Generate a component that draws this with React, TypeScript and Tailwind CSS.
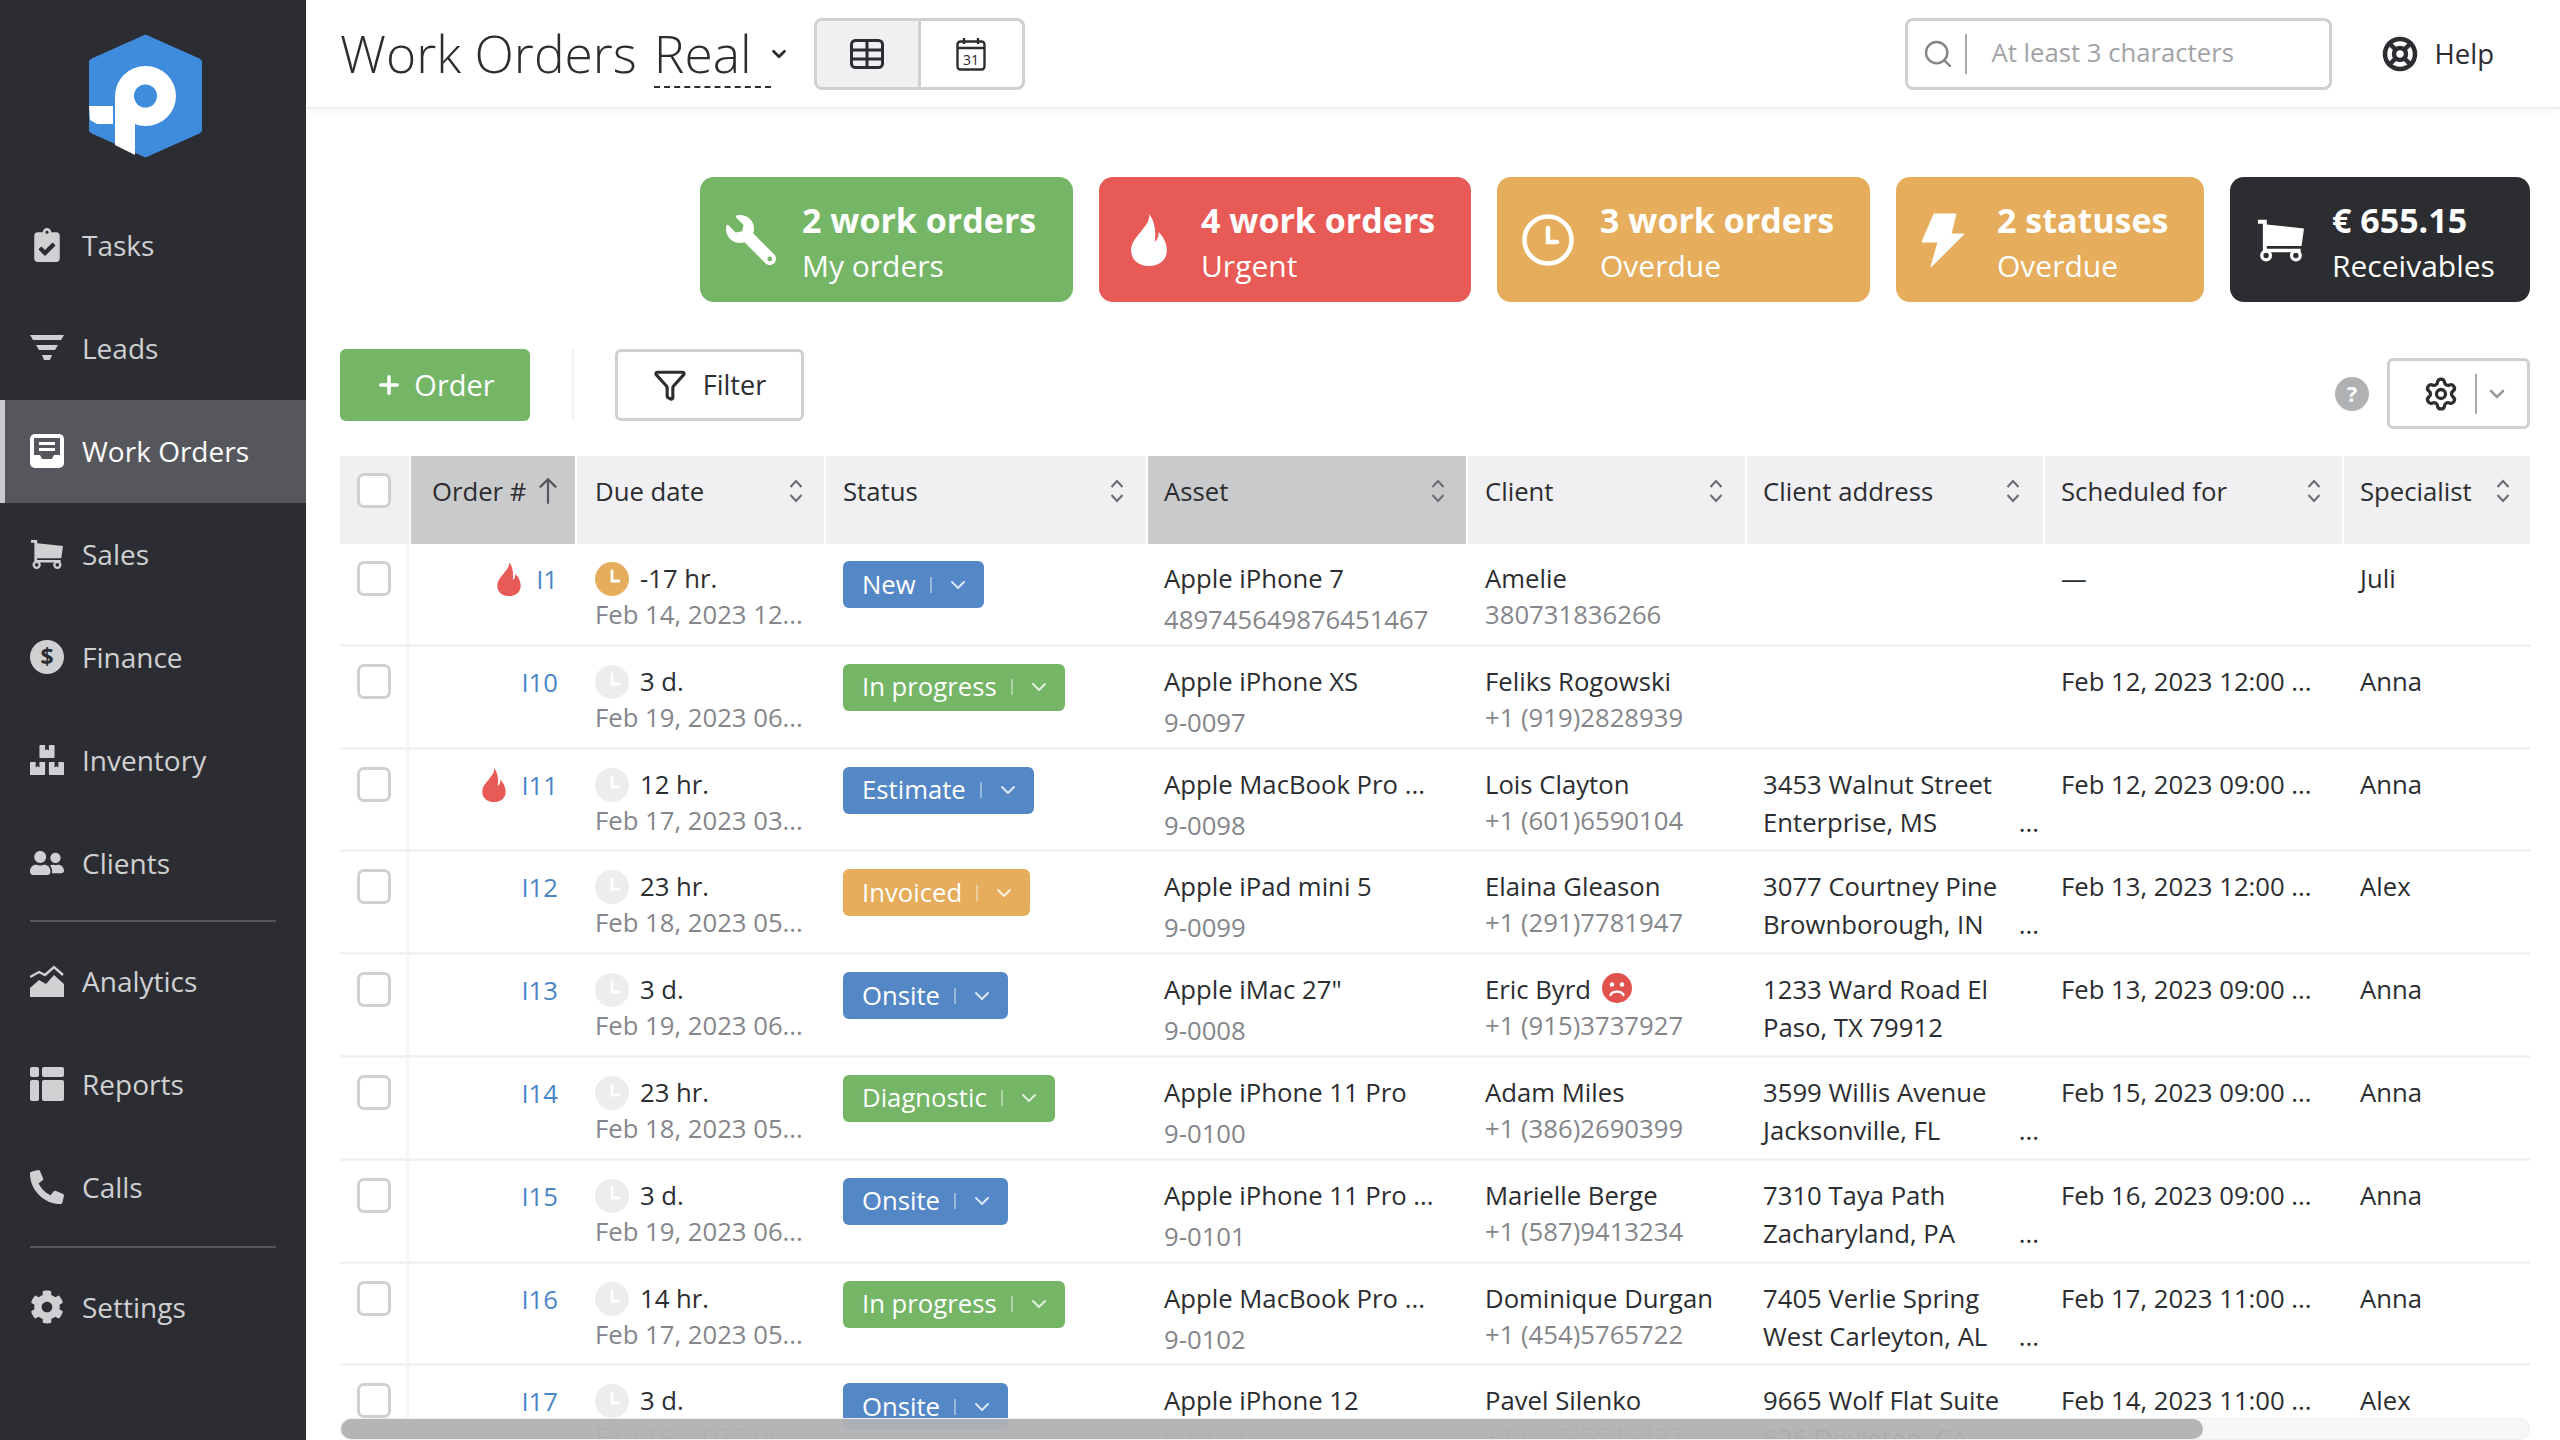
import { ChevronDown, Filter, LifeBuoy, Plus, Search, Settings as Gear } from 'lucide-react';
import { FaBoxes, FaClipboardCheck, FaCog, FaPhoneAlt, FaUserFriends, FaWrench } from 'react-icons/fa';
import type { ReactNode } from 'react';

// shared column template: header row and body rows must stay in step
const COLS = 'grid grid-cols-[69px_164px_247px_320px_318px_277px_296px_297px_186px] gap-x-[2px]';

function Logo() {
  return (
    <svg viewBox="0 0 113 124" className="w-[113px] h-[124px]">
      <path d="M56.5 2 L108 25 Q113 27 113 33 V91 Q113 97 108 99 L56.5 122 L5 99 Q0 97 0 91 V33 Q0 27 5 25 Z" fill="#3f8bdc" stroke="#3f8bdc" strokeWidth="3" strokeLinejoin="round" />
      <ellipse cx="56.5" cy="62" rx="30.5" ry="30" fill="#fff" />
      <polygon points="26,62 46,62 46,121 26,111" fill="#fff" />
      <path d="M0 72 H24 V90 H8 L1 86 Z" fill="#fff" />
      <ellipse cx="56.5" cy="62" rx="11.5" ry="11.5" fill="#3f8bdc" />
    </svg>
  );
}

function LeadsIcon() {
  return (
    <svg viewBox="0 0 34 26" className="w-[34px] h-[26px]" fill="currentColor">
      <polygon points="0,0 34,0 31,5 3,5" />
      <polygon points="6,10 28,10 25,15 9,15" />
      <polygon points="12,20 22,20 20,25 14,25" />
    </svg>
  );
}

function WorkOrdersIcon() {
  return (
    <svg viewBox="0 0 34 34" className="w-[34px] h-[34px]">
      <rect width="34" height="34" rx="5" fill="#fff" />
      <path d="M4 4h26v17h-6l-2 4H12l-2-4H4z" fill="#56575c" />
      <rect x="9" y="8" width="16" height="3" fill="#fff" />
      <rect x="9" y="14" width="16" height="3" fill="#fff" />
    </svg>
  );
}

function CartIcon({ size }: { size: string }) {
  return (
    <svg viewBox="0 0 34 32" className={size} fill="currentColor">
      <path d="M0 1h6.5v3.5L34 7.5l-1.8 13H6.5v2h25v2.5H3.6V4H0z" />
      <circle cx="6" cy="27.5" r="3.2" fill="none" stroke="currentColor" strokeWidth="2.4" />
      <circle cx="28" cy="27.5" r="3.2" fill="none" stroke="currentColor" strokeWidth="2.4" />
    </svg>
  );
}

function FinanceIcon() {
  return (
    <svg viewBox="0 0 34 34" className="w-[34px] h-[34px]">
      <circle cx="17" cy="17" r="17" fill="currentColor" />
      <text x="17" y="25" textAnchor="middle" fontSize="23" fontWeight="700" fill="#2c2d32" fontFamily="Open Sans, sans-serif">$</text>
    </svg>
  );
}

function AnalyticsIcon() {
  return (
    <svg viewBox="0 0 34 32" className="w-[34px] h-[32px]" fill="currentColor">
      <path d="M0 12 L9 7 L15 10 L24 2 L33 10" fill="none" stroke="currentColor" strokeWidth="2.4" />
      <path d="M0 32 V23 L9 15 L16 19 L24 10 L34 19 V32 Z" />
    </svg>
  );
}

function ReportsIcon() {
  return (
    <svg viewBox="0 0 34 34" className="w-[34px] h-[34px]" fill="currentColor">
      <rect width="9" height="10" rx="2" />
      <rect y="13" width="9" height="21" rx="2" />
      <rect x="12" width="22" height="10" rx="2" />
      <rect x="12" y="13" width="22" height="21" rx="2" />
    </svg>
  );
}

const navTop: { label: string; icon: ReactNode; active?: boolean }[] = [
  { label: 'Tasks', icon: <FaClipboardCheck className="w-[30px] h-[34px]" /> },
  { label: 'Leads', icon: <LeadsIcon /> },
  { label: 'Work Orders', icon: <WorkOrdersIcon />, active: true },
  { label: 'Sales', icon: <CartIcon size="w-[32px] h-[32px]" /> },
  { label: 'Finance', icon: <FinanceIcon /> },
  { label: 'Inventory', icon: <FaBoxes className="w-[34px] h-[34px]" /> },
  { label: 'Clients', icon: <FaUserFriends className="w-[36px] h-[30px]" /> },
];

const navMid = [
  { label: 'Analytics', icon: <AnalyticsIcon /> },
  { label: 'Reports', icon: <ReportsIcon /> },
  { label: 'Calls', icon: <FaPhoneAlt className="w-[34px] h-[34px]" /> },
];

function NavItem({ label, icon, active }: { label: string; icon: ReactNode; active?: boolean }) {
  return (
    <div
      className={
        active
          ? 'h-[103px] flex items-center border-l-[5px] border-[#c9cacc] bg-[#56575c] pl-[25px] pb-[2px] text-white'
          : 'h-[103px] flex items-center pl-[30px] pb-[2px] text-[#cfd0d2]'
      }
    >
      <span className="w-[34px] flex justify-center">{icon}</span>
      <span className="ml-[18px] text-[28px]">{label}</span>
    </div>
  );
}

function Sidebar() {
  return (
    <aside className="w-[306px] shrink-0 bg-[#2c2d32] h-full">
      <div className="h-[194px] pt-[34px] pl-[89px]">
        <Logo />
      </div>
      {navTop.map((n) => (
        <NavItem key={n.label} {...n} />
      ))}
      <div className="mx-[30px] mt-[5px] mb-[8px] h-[2px] bg-[#55565a]" />
      {navMid.map((n) => (
        <NavItem key={n.label} {...n} />
      ))}
      <div className="mx-[30px] mt-[7px] mb-[8px] h-[2px] bg-[#55565a]" />
      <NavItem label="Settings" icon={<FaCog className="w-[34px] h-[34px]" />} />
    </aside>
  );
}

function TableIcon() {
  return (
    <svg viewBox="0 0 34 30" className="w-[34px] h-[30px]" fill="none" stroke="#2c2d30" strokeWidth="3">
      <rect x="1.5" y="1.5" width="31" height="27" rx="4" />
      <path d="M1.5 11h31M1.5 20h31M17 1.5v27" />
    </svg>
  );
}

function CalendarIcon() {
  return (
    <svg viewBox="0 0 30 34" className="w-[30px] h-[34px]" fill="none" stroke="#2c2d30" strokeWidth="2.4">
      <rect x="1.5" y="4.5" width="27" height="28" rx="3" />
      <path d="M1.5 11h27M8 1v6M22 1v6" />
      <text x="15" y="28" textAnchor="middle" fontSize="14" fill="#2c2d30" stroke="none" fontFamily="Open Sans, sans-serif">31</text>
    </svg>
  );
}

function Header() {
  return (
    <header className="h-[109px] shrink-0 flex items-center pl-[34px] pr-[66px] border-b-2 border-[#eeeeef] shadow-[0_3px_8px_rgba(0,0,0,0.03)]">
      <h1 className="text-[51.5px] font-light text-[#2c2d30] leading-none">Work Orders</h1>
      <div className="ml-[17px] relative text-[51.5px] font-light text-[#2c2d30] leading-none">
        Real
        <div className="absolute left-0 w-[117px] top-[58px] border-b-2 border-dashed border-[#2c2d30]" />
      </div>
      <ChevronDown className="ml-[16px] w-[22px] h-[22px] text-[#2c2d30]" strokeWidth={3} />
      <div className="ml-[24px] flex h-[72px] w-[211px] rounded-[8px] border-[3px] border-[#cfd0d2] overflow-hidden">
        <div className="w-[104px] flex items-center justify-center bg-[#f0f0f2] border-r-[3px] border-[#cfd0d2]">
          <TableIcon />
        </div>
        <div className="flex-1 flex items-center justify-center">
          <CalendarIcon />
        </div>
      </div>
      <div className="ml-auto flex items-center w-[427px] h-[72px] rounded-[8px] border-[3px] border-[#cfd0d2] pl-[14px]">
        <Search className="w-[32px] h-[32px] text-[#85868a]" strokeWidth={1.8} />
        <div className="ml-[11px] w-[2px] h-[40px] bg-[#a8a9ac]" />
        <span className="ml-[25px] text-[25.7px] text-[#a2a3a6]">At least 3 characters</span>
      </div>
      <LifeBuoy className="ml-[50px] w-[36px] h-[36px] text-[#2c2d30]" strokeWidth={3} />
      <span className="ml-[17px] text-[27.5px] text-[#2c2d30]">Help</span>
    </header>
  );
}

function FlameIcon({ size }: { size: string }) {
  return (
    <svg viewBox="0 0 24 32" className={size} fill="currentColor">
      <path d="M12 0C13 4 9.500 7.500 6.500 11.500 3.500 15 1 18 1 22.500 1 28 5.500 32 12 32s11-4 11-9.500C23 18 21 14 18 11c0 3-1 5-2.500 6C16.500 11 15.500 4 12 0z" />
    </svg>
  );
}

function ClockOutline() {
  return (
    <svg viewBox="0 0 52 52" className="w-[52px] h-[52px]" fill="none" stroke="#fff" strokeWidth="4.500">
      <circle cx="26" cy="26" r="23.500" />
      <path d="M26 14v14h9" strokeLinecap="round" />
    </svg>
  );
}

function BoltIcon() {
  return (
    <svg viewBox="0 0 42 54" className="w-[42px] h-[54px]" fill="#fff">
      <path d="M12 1h22l-5 20h13L9 54l7-25H0z" stroke="#fff" strokeWidth="1" strokeLinejoin="round" />
    </svg>
  );
}

const cards = [
  { w: 'w-[373px]', bg: 'bg-[#74b566]', icon: <FaWrench className="w-[50px] h-[50px] -scale-x-100" />, pad: 'pl-[26px]', gap: 'ml-[26px]', a: '2 work orders', b: 'My orders' },
  { w: 'w-[372px]', bg: 'bg-[#e85a55]', icon: <FlameIcon size="w-[42px] h-[52px]" />, pad: 'pl-[29px]', gap: 'ml-[31px]', a: '4 work orders', b: 'Urgent' },
  { w: 'w-[373px]', bg: 'bg-[#e5ad5c]', icon: <ClockOutline />, pad: 'pl-[25px]', gap: 'ml-[26px]', a: '3 work orders', b: 'Overdue' },
  { w: 'w-[308px]', bg: 'bg-[#e5ad5c]', icon: <BoltIcon />, pad: 'pl-[26px]', gap: 'ml-[33px]', a: '2 statuses', b: 'Overdue' },
  { w: 'w-[300px]', bg: 'bg-[#2c2d30]', icon: <CartIcon size="w-[46px] h-[46px]" />, pad: 'pl-[28px]', gap: 'ml-[28px]', a: '€ 655.15', b: 'Receivables' },
];

function SummaryCards() {
  return (
    <div className="mt-[68px] flex justify-end gap-[26px] pr-[30px]">
      {cards.map((c) => (
        <div key={c.a + c.b} className={`${c.w} ${c.bg} ${c.pad} h-[125px] rounded-[14px] flex items-center text-white`}>
          {c.icon}
          <div className={`${c.gap} pt-[6px]`}>
            <div className="text-[34px] font-bold leading-[46px]">{c.a}</div>
            <div className="text-[30px] leading-[46px]">{c.b}</div>
          </div>
        </div>
      ))}
    </div>
  );
}

function Toolbar() {
  return (
    <div className="mt-[47px] flex items-start pl-[34px] pr-[30px]">
      <div className="w-[190px] h-[72px] rounded-[6px] bg-[#74b566] flex items-center justify-center text-white text-[29px]">
        <Plus className="w-[28px] h-[28px]" strokeWidth={3} />
        <span className="ml-[11px]">Order</span>
      </div>
      <div className="ml-[42px] w-[2px] h-[72px] bg-[#f2f2f3]" />
      <div className="ml-[41px] w-[189px] h-[72px] rounded-[6px] border-[3px] border-[#cfd0d2] flex items-center justify-center text-[27px] text-[#2c2d30]">
        <Filter className="w-[34px] h-[34px]" strokeWidth={2.2} />
        <span className="ml-[16px]">Filter</span>
      </div>
      <div className="ml-auto mt-[9px] flex items-center">
        <div className="w-[34px] h-[34px] rounded-full bg-[#b0b1b3] flex items-center justify-center text-white text-[22px] font-bold">?</div>
        <div className="ml-[18px] w-[143px] h-[71px] rounded-[6px] border-[3px] border-[#cfd0d2] flex items-center pl-[33px]">
          <Gear className="w-[36px] h-[36px] text-[#2c2d30]" strokeWidth={2.2} />
          <div className="ml-[16px] w-[2px] h-[40px] bg-[#a8a9ac]" />
          <ChevronDown className="ml-[8px] w-[24px] h-[24px] text-[#9a9b9e]" strokeWidth={2.6} />
        </div>
      </div>
    </div>
  );
}

function SortIcon() {
  return (
    <svg viewBox="0 0 14 24" className="w-[14px] h-[24px]" fill="none" stroke="#6b6c70" strokeWidth="2">
      <path d="M1.500 8 7 2l5.500 6M1.500 16 7 22l5.500-6" />
    </svg>
  );
}

function HeadCell({ label, className }: { label: string; className: string }) {
  return (
    <div className={`bg-[#f0f0f2] pt-[15px] flex justify-between items-start ${className}`}>
      <span>{label}</span>
      <span className="mt-[8px]"><SortIcon /></span>
    </div>
  );
}

function Checkbox() {
  return <div className="w-[34px] h-[35px] rounded-[7px] border-[3px] border-[#cfd0d2] bg-white" />;
}

function TableHead() {
  return (
    <div className={`${COLS} h-[88px] text-[25.7px] leading-[42px] text-[#2c2d30]`}>
      <div className="bg-[#f0f0f2] pt-[17px] pl-[17px]">
        <Checkbox />
      </div>
      <div className="bg-[#c9cacc] pt-[15px] pl-[21px] flex items-start">
        <span>Order #</span>
        <svg viewBox="0 0 22 30" className="ml-[12px] mt-[6px] w-[20px] h-[28px]" fill="none" stroke="#55565a" strokeWidth="2.400">
          <path d="M11 29V2M2 11l9-9 9 9" />
        </svg>
      </div>
      <HeadCell label="Due date" className="pl-[18px] pr-[21px]" />
      <HeadCell label="Status" className="pl-[17px] pr-[22px]" />
      <HeadCell label="Asset" className="pl-[16px] pr-[21px] !bg-[#c9cacc]" />
      <HeadCell label="Client" className="pl-[17px] pr-[22px]" />
      <HeadCell label="Client address" className="pl-[16px] pr-[23px]" />
      <HeadCell label="Scheduled for" className="pl-[16px] pr-[21px]" />
      <HeadCell label="Specialist" className="pl-[16px] pr-[20px]" />
    </div>
  );
}

const BLUE = 'bg-[#5487c5]';
const GREEN = 'bg-[#74b566]';
const ORANGE = 'bg-[#e5ad5c]';

type Row = {
  id: string; urgent?: boolean; overdue?: boolean; left: string; due: string;
  status: string; tone: string; asset: string; serial: string;
  client: string; sad?: boolean; phone: string;
  addr1?: string; addr2?: string; more?: boolean; sched: string; who: string;
};

const rows: Row[] = [
  { id: 'I1', urgent: true, overdue: true, left: '-17 hr.', due: 'Feb 14, 2023 12...', status: 'New', tone: BLUE, asset: 'Apple iPhone 7', serial: '489745649876451467', client: 'Amelie', phone: '380731836266', sched: '—', who: 'Juli' },
  { id: 'I10', left: '3 d.', due: 'Feb 19, 2023 06...', status: 'In progress', tone: GREEN, asset: 'Apple iPhone XS', serial: '9-0097', client: 'Feliks Rogowski', phone: '+1 (919)2828939', sched: 'Feb 12, 2023 12:00 ...', who: 'Anna' },
  { id: 'I11', urgent: true, left: '12 hr.', due: 'Feb 17, 2023 03...', status: 'Estimate', tone: BLUE, asset: 'Apple MacBook Pro ...', serial: '9-0098', client: 'Lois Clayton', phone: '+1 (601)6590104', addr1: '3453 Walnut Street', addr2: 'Enterprise, MS', more: true, sched: 'Feb 12, 2023 09:00 ...', who: 'Anna' },
  { id: 'I12', left: '23 hr.', due: 'Feb 18, 2023 05...', status: 'Invoiced', tone: ORANGE, asset: 'Apple iPad mini 5', serial: '9-0099', client: 'Elaina Gleason', phone: '+1 (291)7781947', addr1: '3077 Courtney Pine', addr2: 'Brownborough, IN', more: true, sched: 'Feb 13, 2023 12:00 ...', who: 'Alex' },
  { id: 'I13', left: '3 d.', due: 'Feb 19, 2023 06...', status: 'Onsite', tone: BLUE, asset: 'Apple iMac 27"', serial: '9-0008', client: 'Eric Byrd', sad: true, phone: '+1 (915)3737927', addr1: '1233 Ward Road El', addr2: 'Paso, TX 79912', sched: 'Feb 13, 2023 09:00 ...', who: 'Anna' },
  { id: 'I14', left: '23 hr.', due: 'Feb 18, 2023 05...', status: 'Diagnostic', tone: GREEN, asset: 'Apple iPhone 11 Pro', serial: '9-0100', client: 'Adam Miles', phone: '+1 (386)2690399', addr1: '3599 Willis Avenue', addr2: 'Jacksonville, FL', more: true, sched: 'Feb 15, 2023 09:00 ...', who: 'Anna' },
  { id: 'I15', left: '3 d.', due: 'Feb 19, 2023 06...', status: 'Onsite', tone: BLUE, asset: 'Apple iPhone 11 Pro ...', serial: '9-0101', client: 'Marielle Berge', phone: '+1 (587)9413234', addr1: '7310 Taya Path', addr2: 'Zacharyland, PA', more: true, sched: 'Feb 16, 2023 09:00 ...', who: 'Anna' },
  { id: 'I16', left: '14 hr.', due: 'Feb 17, 2023 05...', status: 'In progress', tone: GREEN, asset: 'Apple MacBook Pro ...', serial: '9-0102', client: 'Dominique Durgan', phone: '+1 (454)5765722', addr1: '7405 Verlie Spring', addr2: 'West Carleyton, AL', more: true, sched: 'Feb 17, 2023 11:00 ...', who: 'Anna' },
  { id: 'I17', left: '3 d.', due: 'Feb 19, 2023 06...', status: 'Onsite', tone: BLUE, asset: 'Apple iPhone 12', serial: '9-0103', client: 'Pavel Silenko', phone: '+1 (565)5545427', addr1: '9665 Wolf Flat Suite', addr2: '626 Doyleton, CA', sched: 'Feb 14, 2023 11:00 ...', who: 'Alex' },
];

function ClockBadge({ overdue }: { overdue?: boolean }) {
  return (
    <svg viewBox="0 0 34 34" className="w-[34px] h-[34px] shrink-0">
      <circle cx="17" cy="17" r="17" fill={overdue ? '#e5ad5c' : '#ededef'} />
      <path d="M17 9v10h7" fill="none" stroke="#fff" strokeWidth="2.800" strokeLinecap="round" />
    </svg>
  );
}

function SadFace() {
  return (
    <svg viewBox="0 0 30 30" className="ml-[11px] mt-[-4px] w-[30px] h-[30px]">
      <circle cx="15" cy="15" r="15" fill="#e2524d" />
      <circle cx="10" cy="11.500" r="2.200" fill="#fff" />
      <circle cx="20" cy="11.500" r="2.200" fill="#fff" />
      <path d="M8.500 22c2-4.500 11-4.500 13 0" fill="none" stroke="#fff" strokeWidth="2.400" strokeLinecap="round" />
    </svg>
  );
}

function TableRow({ r }: { r: Row }) {
  return (
    <div className={`${COLS} h-[102.800px] border-b-[3px] border-[#f2f2f4] text-[25.7px] leading-[36px] text-[#2c2d30]`}>
      <div className="pt-[17px] pl-[17px] border-r-[3px] border-[#f6f6f8]">
        <Checkbox />
      </div>
      <div className="pt-[18px] pr-[17px] flex justify-end items-start">
        {r.urgent && (
          <span className="mr-[13px] text-[#e85a55]"><FlameIcon size="w-[28px] h-[34px]" /></span>
        )}
        <span className="text-[#4a86c5]">{r.id}</span>
      </div>
      <div className="pt-[17px] pl-[18px]">
        <div className="flex items-center">
          <ClockBadge overdue={r.overdue} />
          <span className="ml-[11px]">{r.left}</span>
        </div>
        <div className="text-[#85868a] whitespace-nowrap">{r.due}</div>
      </div>
      <div className="pt-[17px] pl-[17px]">
        <div className={`${r.tone} inline-flex items-center h-[47px] rounded-[6px] pl-[19px] pr-[14px] text-white`}>
          <span>{r.status}</span>
          <span className="ml-[14px] w-[2px] h-[16px] bg-white/40" />
          <ChevronDown className="ml-[14px] w-[24px] h-[24px] text-white/80" strokeWidth={2} />
        </div>
      </div>
      <div className="pt-[17px] pl-[16px] whitespace-nowrap">
        <div>{r.asset}</div>
        <div className="mt-[5px] text-[#85868a]">{r.serial}</div>
      </div>
      <div className="pt-[17px] pl-[17px] whitespace-nowrap">
        <div className="flex items-center">
          <span>{r.client}</span>
          {r.sad && <SadFace />}
        </div>
        <div className="text-[#85868a]">{r.phone}</div>
      </div>
      <div className="pt-[17px] pl-[16px] pr-[4px] whitespace-nowrap">
        <div>{r.addr1}</div>
        <div className="mt-[2px] flex justify-between">
          <span>{r.addr2}</span>
          {r.more && <span>...</span>}
        </div>
      </div>
      <div className="pt-[17px] pl-[16px] whitespace-nowrap">{r.sched}</div>
      <div className="pt-[17px] pl-[16px]">{r.who}</div>
    </div>
  );
}

export default function App() {
  return (
    <div className="w-[2560px] h-[1440px] flex overflow-hidden bg-white font-['Open_Sans',sans-serif]">
      <Sidebar />
      <main className="flex-1 min-w-0 flex flex-col">
        <Header />
        <SummaryCards />
        <Toolbar />
        <div className="relative flex-1 min-h-0 mt-[27px] ml-[34px] mr-[30px] overflow-hidden">
          <TableHead />
          {rows.map((r) => (
            <TableRow key={r.id} r={r} />
          ))}
          <div className="absolute left-0 right-0 bottom-0 h-[22px] rounded-full bg-[#f4f4f5]/70 border border-[#eeeeef]">
            <div className="w-[1862px] h-full rounded-full bg-[#a9a9ab]/85" />
          </div>
        </div>
      </main>
    </div>
  );
}
